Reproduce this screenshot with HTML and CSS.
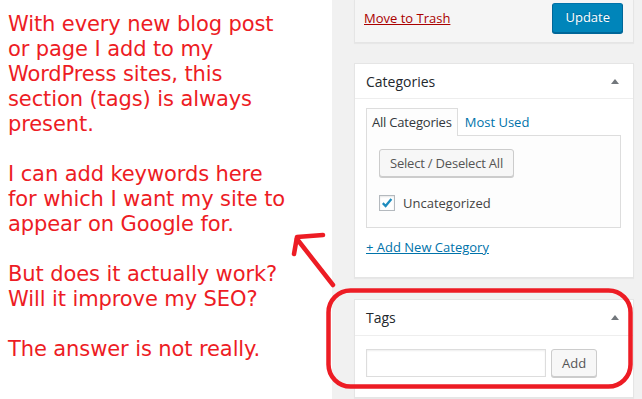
FILE: index.html
```html
<!DOCTYPE html>
<html lang="en">

<head>
    <meta charset="UTF-8">
    <meta name="viewport" content="width=device-width, initial-scale=1.0">
    <title>Tags box</title>
    <link rel="stylesheet" href="styles.css">
</head>

<body>
    <div class="page">
        <div class="note">
            <p>With every new blog post<br>or page I add to my<br>WordPress sites, this<br>section (tags) is always<br>present.</p>
            <p>I can add keywords here<br>for which I want my site to<br>appear on Google for.</p>
            <p>But does it actually work?<br>Will it improve my SEO?</p>
            <p>The answer is not really.</p>
        </div>

        <div class="sidebar">
            <div class="publish">
                <div class="publish-actions">
                    <a class="trash" href="#">Move to Trash</a>
                    <button class="btn btn-primary">Update</button>
                </div>
            </div>

            <div class="postbox">
                <div class="postbox-head">
                    <h2>Categories</h2>
                    <span class="toggle"></span>
                </div>
                <div class="inside">
                    <ul class="tabs">
                        <li class="active">All Categories</li>
                        <li><a href="#">Most Used</a></li>
                    </ul>
                    <div class="tabs-panel">
                        <button class="btn">Select / Deselect All</button>
                        <label class="check">
                            <span class="checkbox">
                                <svg width="16" height="16" viewBox="0 0 16 16">
                                    <polyline points="3.2,8.2 6.4,11.4 13,3.4" fill="none" stroke="#1e8cbe" stroke-width="2.6" />
                                </svg>
                            </span>
                            Uncategorized
                        </label>
                    </div>
                    <a class="add-new" href="#">+ Add New Category</a>
                </div>
            </div>

            <div class="postbox postbox-tags">
                <div class="postbox-head">
                    <h2>Tags</h2>
                    <span class="toggle"></span>
                </div>
                <div class="inside">
                    <div class="tag-row">
                        <input class="tag-input" type="text">
                        <button class="btn">Add</button>
                    </div>
                </div>
            </div>
        </div>

        <!-- hand drawn markup on top of the screenshot -->
        <svg class="markup" width="642" height="399" viewBox="0 0 642 399">
            <g fill="none" stroke="#ed1c24" stroke-width="4.5" stroke-linecap="round" stroke-linejoin="round">
                <line x1="333" y1="285" x2="297" y2="239" />
                <polyline points="323,235 297,237 294,254" />
                <rect x="328.5" y="290.5" width="302" height="96" rx="22" />
            </g>
        </svg>
    </div>
</body>

</html>
```

FILE: styles.css
```css
* {
    box-sizing: border-box;
}

body {
    margin: 0;
    background: #fff;
}

.page {
    position: relative;
    display: flex;
    width: 642px;
    height: 399px;
    overflow: hidden;
}

/* left: the note */
.note {
    width: 333px;
    padding: 12px 0 0 8px;
    font-family: "DejaVu Sans", Verdana, sans-serif;
    font-size: 21px;
    line-height: 25px;
    letter-spacing: -0.1px;
    color: #ed1c24;
}

.note p {
    margin: 0 0 25px;
}

/* right: wp sidebar */
.sidebar {
    flex: 1;
    background: #f1f1f1;
    padding: 0 8px 0 22px;
    font-family: "Open Sans", "Liberation Sans", sans-serif;
    font-size: 13px;
    color: #32373c;
}

.publish {
    height: 43px;
    background: #f5f5f5;
    border: 1px solid #e5e5e5;
    border-top: none;
    box-shadow: 0 1px 1px rgba(0, 0, 0, .04);
    padding: 2px 10px 0 9px;
}

.publish-actions {
    display: flex;
    justify-content: space-between;
    align-items: center;
    height: 31px;
}

.trash {
    color: #a00;
    text-decoration: underline;
}

.btn {
    height: 28px;
    padding: 0 10px 1px;
    font-family: inherit;
    font-size: 13px;
    color: #555;
    background: #f7f7f7;
    border: 1px solid #ccc;
    border-radius: 3px;
    box-shadow: 0 1px 0 #ccc;
}

.btn-primary {
    height: 30px;
    padding: 0 12px 2px;
    color: #fff;
    background: #0085ba;
    border-color: #0073aa #006799 #006799;
    box-shadow: 0 1px 0 #006799;
    text-shadow: 0 -1px 1px #006799;
}

.postbox {
    margin-top: 20px;
    background: #fff;
    border: 1px solid #e5e5e5;
    box-shadow: 0 1px 1px rgba(0, 0, 0, .04);
}

.postbox-tags {
    margin-top: 21px;
}

.postbox-head {
    display: flex;
    justify-content: space-between;
    align-items: center;
    height: 35px;
    padding: 0 14px 0 11px;
    border-bottom: 1px solid #eee;
}

.postbox-tags .postbox-head {
    height: 36px;
}

.postbox-head h2 {
    margin: 0;
    font-size: 14px;
    font-weight: 400;
    color: #23282d;
}

.toggle {
    width: 0;
    height: 0;
    border-left: 4px solid transparent;
    border-right: 4px solid transparent;
    border-bottom: 5px solid #72777c;
}

.inside {
    padding: 9px 12px 20px 11px;
}

.tabs {
    display: flex;
    gap: 1px;
    margin: 0;
    padding: 0;
    list-style: none;
}

.tabs li {
    height: 28px;
    margin-bottom: -1px;
    padding: 4px 5px 0;
    border: 1px solid transparent;
    border-bottom: none;
    position: relative;
}

.tabs li.active {
    background: #fdfdfd;
    border-color: #ddd;
    letter-spacing: -0.2px;
}

.tabs a {
    color: #0073aa;
    text-decoration: none;
}

.tabs-panel {
    width: 255px;
    padding: 13px 12px 16px;
    background: #fdfdfd;
    border: 1px solid #ddd;
}

.tabs-panel .btn {
    letter-spacing: -0.2px;
}

.check {
    display: flex;
    align-items: center;
    gap: 8px;
    margin-top: 18px;
    height: 16px;
    color: #444;
}

.checkbox {
    width: 16px;
    height: 16px;
    background: #fff;
    border: 1px solid #b4b9be;
    box-shadow: inset 0 1px 2px rgba(0, 0, 0, .1);
    display: flex;
    align-items: center;
    justify-content: center;
}

.add-new {
    display: inline-block;
    margin-top: 9px;
    line-height: 20px;
    color: #0073aa;
    text-decoration: underline;
}

.postbox-tags .inside {
    padding-top: 13px;
}

.tag-row {
    display: flex;
    gap: 5px;
}

.tag-input {
    width: 180px;
    height: 28px;
    border: 1px solid #ddd;
    box-shadow: inset 0 1px 2px rgba(0, 0, 0, .07);
}

.markup {
    position: absolute;
    left: 0;
    top: 0;
    pointer-events: none;
}
```
